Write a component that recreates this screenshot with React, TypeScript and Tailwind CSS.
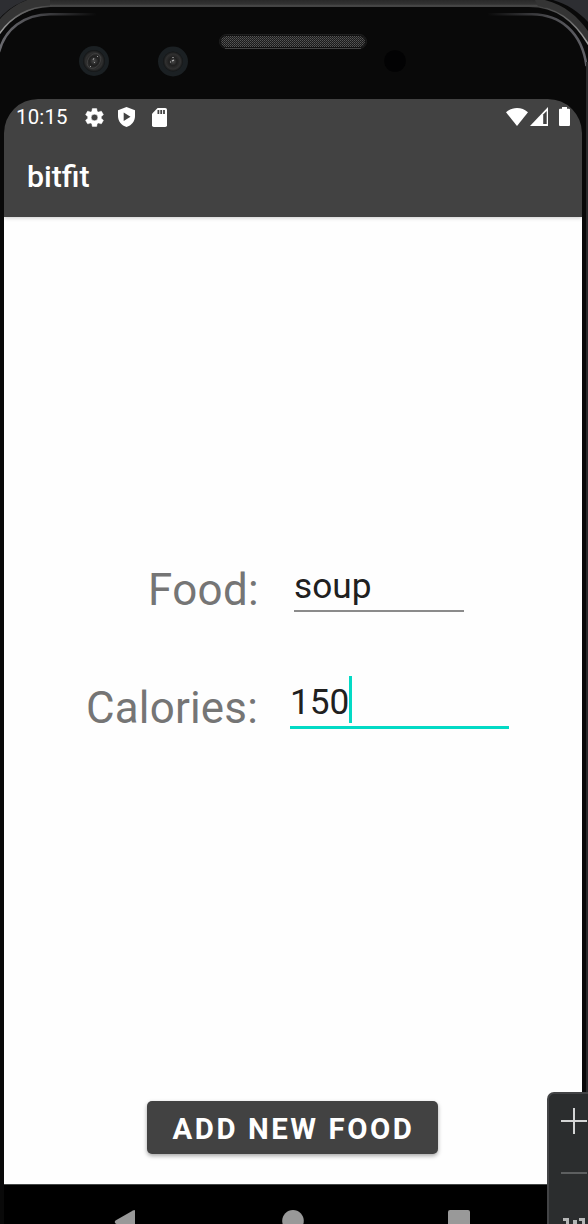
import React from "react";

function PhoneBezel() {
  return (
    <svg className="absolute inset-0 h-[1224px] w-[588px]" viewBox="0 0 588 1224" aria-hidden="true">
      <defs>
        <linearGradient id="rim" x1="0" y1="0" x2="0" y2="1">
          <stop offset="0" stopColor="#292929" />
          <stop offset="0.6" stopColor="#333333" />
          <stop offset="0.8" stopColor="#484848" />
          <stop offset="1" stopColor="#3c3c3c" />
        </linearGradient>
        <linearGradient id="edge" gradientUnits="userSpaceOnUse" x1="0" y1="0" x2="588" y2="0">
          <stop offset="0" stopColor="#a0a0a0" />
          <stop offset="0.03" stopColor="#6a6a6a" />
          <stop offset="0.09" stopColor="#444444" />
          <stop offset="0.92" stopColor="#444444" />
          <stop offset="0.97" stopColor="#6a6a6a" />
          <stop offset="1" stopColor="#a0a0a0" />
        </linearGradient>
        <linearGradient id="glintLeft" gradientUnits="userSpaceOnUse" x1="0" y1="0" x2="96" y2="0">
          <stop offset="0" stopColor="#69696e" />
          <stop offset="0.35" stopColor="#4c4c50" />
          <stop offset="1" stopColor="#0a0a0a" />
        </linearGradient>
        <linearGradient id="glintRight" gradientUnits="userSpaceOnUse" x1="586" y1="0" x2="488" y2="0">
          <stop offset="0" stopColor="#606066" />
          <stop offset="0.35" stopColor="#4c4c50" />
          <stop offset="1" stopColor="#0a0a0a" />
        </linearGradient>
        <radialGradient id="lens">
          <stop offset="0" stopColor="#4a4a4a" />
          <stop offset="0.4" stopColor="#202020" />
          <stop offset="0.75" stopColor="#303030" />
          <stop offset="1" stopColor="#121415" />
        </radialGradient>
        <pattern id="mesh" width="4" height="4" patternUnits="userSpaceOnUse">
          <rect width="4" height="4" fill="#1b1b1b" />
          <path d="M0 0h1v1H0zM2 0h1v1H2zM0 2h1v1H0zM2 2h1v1H2z" fill="#575757" />
          <path d="M1 1h1v1H1zM3 1h1v1H3zM1 3h1v1H1zM3 3h1v1H3z" fill="#454545" />
        </pattern>
      </defs>
      <rect width="588" height="1224" fill="#090909" />
      <rect x="40" y="0" width="505" height="7" fill="url(#rim)" />
      <path d="M0 0H27C16 4 7 10 0 18Z" fill="#2d2e32" />
      <path d="M27 0H50V6C29 8 12 17 0 33V19C7 11 16 4 27 0Z" fill="#343434" />
      <path d="M553 0H588V22C579 12 567 4 553 0Z" fill="#2d2e32" />
      <path d="M535 0H545C565 5 578 17 588 31V43C577 25 561 9 538 6.500Z" fill="#343434" />
      <path d="M-2 36C11 16 28 7 50 6.300H528C556 6 574 20 590 47" fill="none" stroke="url(#edge)" strokeWidth="1.500" />
      <path d="M-1 52C5 29 24 14.500 50 14.300H96" fill="none" stroke="url(#glintLeft)" strokeWidth="2.500" />
      <path d="M586.500 66C582 32 560 14.500 532 14.300H488" fill="none" stroke="url(#glintRight)" strokeWidth="2.500" />
      <path d="M587 62V1224" stroke="#29292b" strokeWidth="2" />
      <g>
        <circle cx="94" cy="61" r="15" fill="#1b2023" />
        <circle cx="94" cy="61" r="11" fill="url(#lens)" />
        <ellipse cx="94" cy="61" rx="6" ry="8" fill="none" stroke="#4a4a4a" strokeWidth=".6" transform="rotate(35 94 61)" />
        <path d="M97 56l1 1M93 60l1-2M90 66l1 1M94 63l1-1" stroke="#999" strokeWidth="1" />
        <circle cx="173" cy="61.500" r="15" fill="#1b2023" />
        <circle cx="173" cy="61.500" r="10" fill="url(#lens)" />
        <path d="M173 57v1M172 61l2-1M170 62h1" stroke="#bbb" strokeWidth="1.200" />
      </g>
      <rect x="219.500" y="34.500" width="147" height="14" rx="7" fill="#111" stroke="#1e1e1e" />
      <rect x="221" y="36" width="144" height="11" rx="5.500" fill="url(#mesh)" />
      <path d="M225 48.500H361" stroke="#444" />
      <circle cx="395" cy="61" r="10.800" fill="#020203" />
    </svg>
  );
}

function SettingsIcon() {
  return (
    <svg viewBox="2 2 20 20" className="h-[19px] w-[19px]" fill="#fff" stroke="#fff" strokeWidth=".5">
      <path d="M19.14 12.94c.04-.3.06-.61.06-.94 0-.32-.02-.64-.07-.94l2.03-1.58a.49.49 0 0 0 .12-.61l-1.92-3.32a.49.49 0 0 0-.59-.22l-2.39.96c-.5-.38-1.03-.7-1.62-.94l-.36-2.54a.48.48 0 0 0-.48-.41h-3.84a.48.48 0 0 0-.47.41l-.36 2.54c-.59.24-1.13.57-1.62.94l-2.39-.96a.48.48 0 0 0-.59.22L2.74 8.87a.48.48 0 0 0 .12.61l2.03 1.58c-.05.3-.09.63-.09.94s.02.64.07.94l-2.03 1.58a.49.49 0 0 0-.12.61l1.92 3.32c.12.22.37.29.59.22l2.39-.96c.5.38 1.03.7 1.62.94l.36 2.54c.05.24.24.41.48.41h3.84c.24 0 .44-.17.47-.41l.36-2.54c.59-.24 1.13-.56 1.62-.94l2.39.96c.22.08.47 0 .59-.22l1.92-3.32a.49.49 0 0 0-.12-.61l-2.01-1.58zM12 15.500A3.500 3.500 0 1 1 12 8.500a3.500 3.500 0 0 1 0 7z" />
    </svg>
  );
}

function StatusBar() {
  return (
    <div className="flex h-[36px] items-center pr-[12px] pl-[12px]">
      <span className="w-[69px] text-[20.4px] leading-[36px] tracking-[0.2px] text-white">10:15</span>
      <SettingsIcon />
      <svg viewBox="0 0 17 20" className="ml-[14px] h-[20px] w-[17px]">
        <path d="M8.5 0L17 3.2V9C17 14.2 13.4 18.7 8.5 20C3.6 18.7 0 14.2 0 9V3.2Z" fill="#fff" />
        <path d="M5.7 5.6V14L12.5 9.8Z" fill="#424242" />
      </svg>
      <svg viewBox="0 0 15 19" className="ml-[17px] h-[19px] w-[15px]">
        <path d="M5.6 0H13.2Q15 0 15 1.8V17.2Q15 19 13.2 19H1.8Q0 19 0 17.2V5.7Z" fill="#fff" />
        <path d="M5.5 2h1.8v4H5.5zM8.3 2h1.8v4H8.3zM11.1 2h1.8v4h-1.8z" fill="#424242" />
      </svg>
      <svg viewBox="0 0 22 18" className="ml-auto h-[18px] w-[22px]" fill="#fff">
        <path d="M0 4.3C6-1.4 16-1.4 22 4.3L11 18Z" />
      </svg>
      <svg viewBox="0 0 18 19" className="relative -top-px ml-[2px] h-[19px] w-[18px]">
        <path d="M18 0V19H0Z" fill="#fff" />
        <path d="M13.2 7.5L16.7 4V17H13.2Z" fill="#424242" />
      </svg>
      <svg viewBox="0 0 11 19" className="relative -top-px ml-[11px] h-[19px] w-[11px]" fill="#fff">
        <path d="M3 0H8V1.7H10Q11 1.7 11 2.7V18Q11 19 10 19H1Q0 19 0 18V2.7Q0 1.7 1 1.7H3Z" />
      </svg>
    </div>
  );
}

function EmulatorToolbar() {
  return (
    <aside className="absolute top-[1092px] left-[547px] h-[132px] w-[41px] overflow-hidden rounded-tl-[7px] border-t-2 border-l-2 border-[#434446] bg-[#2b2d2e]">
      <svg viewBox="549 1094 39 130" className="h-[130px] w-[39px]">
        <path d="M574 1108V1134M561 1121H587" stroke="#d4d5d5" strokeWidth="2" />
        <path d="M561 1173H587" stroke="#5d5f60" strokeWidth="2" />
        <path d="M563 1218h6v6h-3v-3h-3zM573 1220h4v4h-4zM579 1218h6v6h-3v-3h-3z" fill="#b6b7b7" />
      </svg>
    </aside>
  );
}

export default function App() {
  return (
    <div className="relative h-[1224px] w-[588px] overflow-hidden bg-black font-['Roboto',sans-serif]">
      <PhoneBezel />
      <div className="relative pt-[99px] pl-[4px]">
        <div className="flex h-[1125px] w-[578px] flex-col overflow-hidden rounded-t-[34px] bg-black">
          <header className="z-10 h-[118px] shrink-0 bg-[#424242] shadow-[0_1px_4px_rgba(0,0,0,0.2)]">
            <StatusBar />
            <h1 className="pt-[2px] pl-[23px] text-[30.3px] leading-[80px] font-medium text-white">bitfit</h1>
          </header>
          <main className="flex h-[968px] shrink-0 flex-col border-b border-[#444746] bg-[#fefefe]">
            <div className="mt-[341px] flex h-[73px] shrink-0">
              <label htmlFor="food" className="w-[255px] pt-[2px] text-right text-[43.9px] leading-[60px] tracking-[0.35px] text-[#757575]">Food:</label>
              <div id="food" className="ml-[35px] h-[54px] w-[170px] border-b-2 border-[#8b8b8b] text-[35.2px] leading-[56px] text-[#202020]">soup</div>
            </div>
            <div className="mt-[40px] flex h-[80px] shrink-0">
              <label htmlFor="calories" className="w-[254px] pt-[7px] text-right text-[43.9px] leading-[60px] tracking-[0.2px] text-[#757575]">Calories:</label>
              <div id="calories" className="ml-[32px] flex h-[58px] w-[219px] items-start border-b-3 border-[#03dac5] text-[35.2px] leading-[62px] text-[#202020]">
                <span>150</span>
                <span className="mt-[5px] h-[47px] w-[3px] bg-[#03dac5]" />
              </div>
            </div>
            <button className="mt-auto mb-[30px] ml-[143px] h-[53px] w-[291px] rounded-[5px] bg-[#424242] pt-[4px] pl-[2px] text-[29.4px] leading-[49px] font-bold tracking-[2.55px] text-white shadow-[0_2px_4px_rgba(0,0,0,0.35)]">ADD NEW FOOD</button>
          </main>
          <nav className="flex flex-1 pt-[23px] pl-[110px]">
            <svg viewBox="0 0 360 24" className="h-[24px] w-[360px] shrink-0" fill="#999">
              <path d="M21 3V24H18L1.500 15.500Q0 14 1.500 12.500L19 2.500Q21 1.500 21 3Z" />
              <circle cx="179" cy="12.800" r="10.800" />
              <rect x="334" y="2" width="22" height="26" rx="2" />
            </svg>
          </nav>
        </div>
      </div>
      <EmulatorToolbar />
    </div>
  );
}
